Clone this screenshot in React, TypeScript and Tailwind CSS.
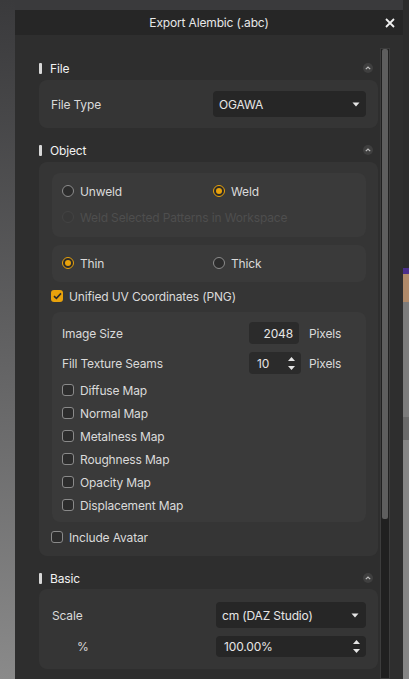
import type { ReactNode } from "react";

const FONT = { fontFamily: "Inter, 'Noto Sans', sans-serif", letterSpacing: "-0.15px" };

function SectionHeader({ title }: { title: string }) {
  return (
    <div className="flex h-[22px] items-center justify-between pr-[5px]">
      <div className="flex items-center">
        <span className="h-[11px] w-[3px] rounded-[1px] bg-[#d8d8d8]" />
        <span className="ml-[8px] pt-[1px] text-[12px] text-[#f2f2f2]">{title}</span>
      </div>
      <span className="flex h-[10px] w-[10px] items-center justify-center rounded-full bg-[#3f3f3f]">
        <svg width="6" height="4" viewBox="0 0 6 4">
          <path d="M0.8 3.2 L3 1 L5.2 3.2" fill="none" stroke="#bdbdbd" strokeWidth="1.2" />
        </svg>
      </span>
    </div>
  );
}

function Radio({ checked, disabled, label }: { checked?: boolean; disabled?: boolean; label: string }) {
  return (
    <div className="flex h-[20px] items-center">
      {checked ? (
        <span className="flex h-[12px] w-[12px] items-center justify-center rounded-full border border-[#e8a20c] bg-[#2a2a2a]">
          <span className="h-[6px] w-[6px] rounded-full bg-[#e8a20c]" />
        </span>
      ) : (
        <span
          className={
            disabled
              ? "h-[12px] w-[12px] rounded-full border border-[#444444] bg-[#383838]"
              : "h-[12px] w-[12px] rounded-full border border-[#8c8c8c] bg-[#2c2c2c]"
          }
        />
      )}
      <span
        className={
          disabled
            ? "ml-[6px] pt-[1px] text-[12px] text-[#4e4e4e]"
            : "ml-[6px] pt-[1px] text-[12px] text-[#dadada]"
        }
      >
        {label}
      </span>
    </div>
  );
}

function Check({ checked, label }: { checked?: boolean; label: string }) {
  return (
    <div className="flex h-[20px] items-center">
      {checked ? (
        <span className="flex h-[12px] w-[12px] items-center justify-center rounded-[3px] bg-[#e8a20c]">
          <svg width="9" height="8" viewBox="0 0 9 8">
            <path d="M1 4.2 L3.4 6.4 L8 1.4" fill="none" stroke="#2a2a2a" strokeWidth="1.6" />
          </svg>
        </span>
      ) : (
        <span className="h-[12px] w-[12px] rounded-[3px] border border-[#8a8a8a] bg-[#2c2c2c]" />
      )}
      <span className="ml-[6px] pt-[1px] text-[12px] text-[#dadada]">{label}</span>
    </div>
  );
}

function Caret() {
  return (
    <svg width="8" height="5" viewBox="0 0 8 5">
      <path d="M0.5 0.5 H7.5 L4 4.5 Z" fill="#e6e6e6" />
    </svg>
  );
}

function Spin() {
  return (
    <div className="flex flex-col items-center gap-[5px]">
      <svg width="7" height="4" viewBox="0 0 7 4">
        <path d="M0 4 H7 L3.5 0 Z" fill="#e6e6e6" />
      </svg>
      <svg width="7" height="4" viewBox="0 0 7 4">
        <path d="M0 0 H7 L3.5 4 Z" fill="#e6e6e6" />
      </svg>
    </div>
  );
}

function Card({ children, className }: { children: ReactNode; className: string }) {
  return <div className={"rounded-[8px] bg-[#353535] " + className}>{children}</div>;
}

export default function App() {
  return (
    <div className="flex h-[679px] w-[409px] overflow-hidden bg-[#3a3a3c]" style={FONT}>
      {/* left backdrop */}
      <div className="w-[15px] shrink-0 bg-gradient-to-b from-[#3a3a3c] to-[#8a8a8a]" />

      <div className="mt-[10px] flex w-[388px] shrink-0 flex-col bg-[#2e2e2e]">
        {/* title bar */}
        <div className="relative flex h-[25px] shrink-0 items-center justify-center bg-[#262626]">
          <span className="pt-[1px] text-[12px] text-[#e8e8e8]">Export Alembic (.abc)</span>
          <svg className="absolute right-[8px] top-[8px]" width="10" height="10" viewBox="0 0 10 10">
            <path d="M1 1 L9 9 M9 1 L1 9" stroke="#f0f0f0" strokeWidth="1.8" />
          </svg>
        </div>

        <div className="flex flex-1 overflow-hidden">
          {/* content */}
          <div className="w-[363px] shrink-0 pl-[24px] pt-[22px]">
            <SectionHeader title="File" />
            <Card className="mt-[1px] mb-[11px] flex h-[48px] items-center justify-between pl-[12px] pr-[12px]">
              <span className="pt-[1px] text-[12px] text-[#dadada]">File Type</span>
              <div className="flex h-[26px] w-[153px] items-center justify-between rounded-[4px] bg-[#262626] pl-[6px] pr-[6px]">
                <span className="pt-[1px] text-[12px] text-[#e6e6e6]">OGAWA</span>
                <Caret />
              </div>
            </Card>

            <SectionHeader title="Object" />
            <Card className="mt-[1px] mb-[11px] pl-[13px] pr-[12px] pt-[11px] pb-[9px]">
              <div className="rounded-[8px] bg-[#3a3a3a] pl-[10px] pt-[8px] pb-[10px]">
                <div className="grid grid-cols-[151px_1fr]">
                  <Radio label="Unweld" />
                  <Radio checked label="Weld" />
                </div>
                <div className="mt-[6px]">
                  <Radio disabled label="Weld Selected Patterns in Workspace" />
                </div>
              </div>

              <div className="mt-[8px] rounded-[8px] bg-[#3a3a3a] pl-[10px] pt-[8px] pb-[9px]">
                <div className="grid grid-cols-[151px_1fr]">
                  <Radio checked label="Thin" />
                  <Radio label="Thick" />
                </div>
              </div>

              <div className="mt-[4px] -ml-[1px]">
                <Check checked label="Unified UV Coordinates (PNG)" />
              </div>

              <div className="mt-[6px] rounded-[8px] bg-[#3a3a3a] pl-[10px] pt-[10px] pb-[7px]">
                <div className="flex h-[22px] items-center">
                  <span className="w-[187px] pt-[1px] text-[12px] text-[#dadada]">Image Size</span>
                  <div className="flex h-[22px] w-[50px] items-center justify-end rounded-[4px] bg-[#2b2b2b] pr-[6px]">
                    <span className="pt-[1px] text-[12px] text-[#e6e6e6]">2048</span>
                  </div>
                  <span className="ml-[10px] pt-[1px] text-[12px] text-[#dadada]">Pixels</span>
                </div>
                <div className="mt-[8px] flex h-[22px] items-center">
                  <span className="w-[187px] pt-[1px] text-[12px] text-[#dadada]">Fill Texture Seams</span>
                  <div className="flex h-[22px] w-[52px] items-center justify-between rounded-[4px] bg-[#2b2b2b] pl-[8px] pr-[6px]">
                    <span className="pt-[1px] text-[12px] text-[#e6e6e6]">10</span>
                    <Spin />
                  </div>
                  <span className="ml-[8px] pt-[1px] text-[12px] text-[#dadada]">Pixels</span>
                </div>
                <div className="mt-[6px] flex flex-col gap-[3px]">
                  <Check label="Diffuse Map" />
                  <Check label="Normal Map" />
                  <Check label="Metalness Map" />
                  <Check label="Roughness Map" />
                  <Check label="Opacity Map" />
                  <Check label="Displacement Map" />
                </div>
              </div>

              <div className="mt-[5px] -ml-[1px]">
                <Check label="Include Avatar" />
              </div>
            </Card>

            <SectionHeader title="Basic" />
            <Card className="mt-[0px] pl-[13px] pr-[12px] pt-[13px] pb-[12px]">
              <div className="flex h-[26px] items-center justify-between">
                <span className="pt-[1px] text-[12px] text-[#dadada]">Scale</span>
                <div className="flex h-[26px] w-[150px] items-center justify-between rounded-[4px] bg-[#262626] pl-[6px] pr-[7px]">
                  <span className="pt-[1px] text-[12px] text-[#e6e6e6]">cm (DAZ Studio)</span>
                  <Caret />
                </div>
              </div>
              <div className="mt-[8px] flex h-[21px] items-center justify-between">
                <span className="pl-[25px] pt-[1px] text-[12px] text-[#dadada]">%</span>
                <div className="flex h-[21px] w-[150px] items-center justify-between rounded-[4px] bg-[#262626] pl-[8px] pr-[6px]">
                  <span className="pt-[1px] text-[12px] text-[#e6e6e6]">100.00%</span>
                  <Spin />
                </div>
              </div>
            </Card>
          </div>

          {/* scrollbar */}
          <div className="ml-[2px] mt-[13px] flex w-[10px] shrink-0 flex-col border border-[#3c3c3c] bg-[#202020]">
            <div className="mx-[1px] h-[470px] rounded-[2px] bg-[#5e5e5e]" />
          </div>
        </div>
      </div>

      {/* right backdrop */}
      <div className="flex w-[6px] shrink-0 flex-col">
        <div className="h-[268px] bg-[#2c2c2c]" />
        <div className="h-[6px] bg-[#4a2f8a]" />
        <div className="h-[28px] bg-[#b08a6a]" />
        <div className="h-[115px] bg-[#7c7c7c]" />
        <div className="h-[23px] bg-[#6a6a6a]" />
        <div className="flex-1 bg-[#858585]" />
      </div>
    </div>
  );
}
